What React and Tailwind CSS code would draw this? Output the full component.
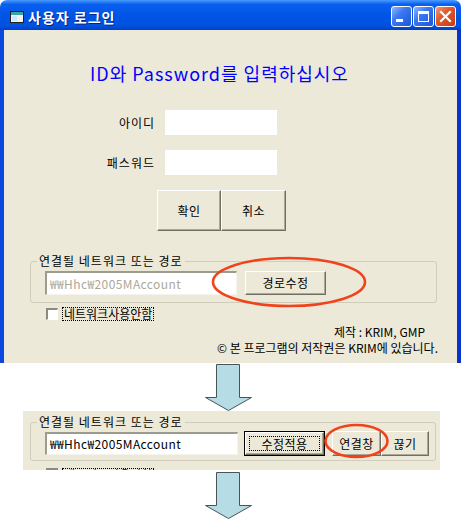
import React from "react";

const FONT = "font-['Noto_Sans_CJK_KR','Noto_Sans',sans-serif]";
const BTN =
  "flex items-center justify-center bg-[#ece9d8] border border-t-white border-l-white border-r-[#716f64] border-b-[#716f64] shadow-[inset_-1px_-1px_0_#aca899] text-[12px] leading-[14px] tracking-[0.5px] text-black";

function Arrow() {
  return (
    <svg width="48" height="48" viewBox="0 0 48 48" className="ml-[205px] block">
      <polygon
        points="11.5,1.5 34.5,1.5 34.5,34.5 46.5,34.5 23.5,47.5 0.5,34.5 11.5,34.5"
        fill="#b6dde6"
        stroke="#4a5358"
        strokeWidth="1"
      />
    </svg>
  );
}

function Sunken({ className, children }) {
  return (
    <div
      className={
        "flex items-center pl-[3px] bg-white border-t-2 border-l-2 border-t-[#9b9b8f] border-l-[#9b9b8f] border-b border-r border-b-[#f4f3ee] border-r-[#f4f3ee] text-[12px] leading-[14px] tracking-[0.4px] " +
        className
      }
    >
      {children}
    </div>
  );
}

function TitleButton({ kind }) {
  const isClose = kind === "close";
  return (
    <div
      className={
        "w-[21px] h-[21px] rounded-[3px] border border-white flex items-center justify-center " +
        (isClose
          ? "bg-[linear-gradient(135deg,#f09a7a_0%,#e0582c_40%,#c93b10_100%)]"
          : "bg-[linear-gradient(135deg,#8fb6ff_0%,#3a78f0_40%,#1d55d8_100%)]")
      }
    >
      <svg width="19" height="19" viewBox="0 0 19 19">
        {kind === "min" && <rect x="4" y="12" width="7" height="3" fill="white" />}
        {kind === "max" && (
          <g>
            <rect x="4.5" y="4.5" width="10" height="10" fill="none" stroke="white" strokeWidth="1" />
            <rect x="4" y="4" width="11" height="3" fill="white" />
          </g>
        )}
        {isClose && (
          <g stroke="white" strokeWidth="2.2" strokeLinecap="square">
            <line x1="5" y1="5" x2="14" y2="14" />
            <line x1="14" y1="5" x2="5" y2="14" />
          </g>
        )}
      </svg>
    </div>
  );
}

export default function App() {
  return (
    <div className={"relative w-[468px] h-[520px] bg-white overflow-hidden text-black " + FONT}>
      {/* Window */}
      <div className="w-[461px]">
        <div className="h-[30px] rounded-t-[7px] bg-[linear-gradient(to_bottom,#4a9cff_0%,#0a60ee_14%,#0055e6_50%,#0052df_86%,#003fc6_100%)] flex items-center pl-[10px] pr-[5px] pt-[3px]">
          <svg width="14" height="12" viewBox="0 0 14 12">
            <rect x="0.5" y="0.5" width="13" height="11" fill="#f2f2f2" stroke="#202020" />
            <rect x="1" y="1" width="12" height="3" fill="#3aa6a0" />
            <rect x="2" y="5" width="5" height="5" fill="#cfe7f7" />
          </svg>
          <span className="ml-[4px] text-white font-bold text-[14px] leading-[16px] tracking-[1px] [text-shadow:1px_1px_0_#0a1e8a]">
            사용자 로그인
          </span>
          <div className="ml-auto flex gap-[1px]">
            <TitleButton kind="min" />
            <TitleButton kind="max" />
            <TitleButton kind="close" />
          </div>
        </div>
        <div className="h-[333px] bg-[#ece9d8] border-l-4 border-r-4 border-l-[#0b48df] border-r-[#0a34c8] flex flex-col overflow-hidden">
          <div className="mt-[32px] pl-[86px] h-[22px] leading-[22px] text-[18px] tracking-[1px] text-[#0000ff] whitespace-nowrap">
            ID와 Password를 입력하십시오
          </div>
          <div className="mt-[26px] flex items-center h-[25px]">
            <div className="w-[151px] text-right text-[12px] leading-[14px] tracking-[1px]">아이디</div>
            <div className="ml-[10px] w-[112px] h-[25px] bg-white" />
          </div>
          <div className="mt-[15px] flex items-center h-[25px]">
            <div className="w-[151px] text-right text-[12px] leading-[14px] tracking-[1px]">패스워드</div>
            <div className="ml-[10px] w-[112px] h-[25px] bg-white" />
          </div>
          <div className="mt-[15px] ml-[153px] flex">
            <div className={BTN + " w-[64px] h-[41px]"}>확인</div>
            <div className={BTN + " w-[65px] h-[41px]"}>취소</div>
          </div>
          <fieldset className="mt-[23px] ml-[26px] w-[407px] border border-[#d0cdbd] rounded-[3px] pl-[14px] pt-[3px] pb-[7px]">
            <legend className="ml-[-8px] px-[2px] text-[12px] leading-[14px] tracking-[1px]">연결될 네트워크 또는 경로</legend>
            <div className="flex items-start gap-[8px]">
              <Sunken className="w-[192px] h-[24px] text-[#aca899]">₩₩Hhc₩2005MAccount</Sunken>
              <div className={BTN + " w-[81px] h-[24px]"}>경로수정</div>
            </div>
          </fieldset>
          <div className="mt-[4px] ml-[42px] flex items-center h-[14px]">
            <div className="w-[12px] h-[12px] bg-white border-t-2 border-l-2 border-t-[#8a8a80] border-l-[#8a8a80] border-b border-r border-b-white border-r-white" />
            <span className="ml-[4px] border border-dotted border-black px-[1px] text-[12px] leading-[12px]">
              네트워크사용안함
            </span>
          </div>
          <div className="mt-[4px] pr-[32px] text-right text-[12px] leading-[14px]">제작 : KRIM, GMP</div>
          <div className="mt-[2px] pr-[19px] text-right text-[12px] leading-[14px] whitespace-nowrap">
            © 본 프로그램의 저작권은 KRIM에 있습니다.
          </div>
        </div>
      </div>

      <Arrow />

      {/* Second panel */}
      <div className="ml-[23px] w-[417px] h-[59px] bg-[#ece9d8] overflow-hidden pt-[4px]">
        <fieldset className="ml-[7px] w-[406px] border border-[#d0cdbd] rounded-[3px] pl-[14px] pt-[2px] pb-[4px]">
          <legend className="ml-[-8px] px-[2px] text-[12px] leading-[14px] tracking-[1px]">연결될 네트워크 또는 경로</legend>
          <div className="flex items-start">
            <Sunken className="mt-[1px] w-[193px] h-[23px] text-black">₩₩Hhc₩2005MAccount</Sunken>
            <div className="ml-[6px] w-[81px] h-[25px] border border-black">
              <div className={BTN + " w-full h-full"}>
                <span className="border border-dotted border-black w-[71px] h-[15px] flex items-center justify-center">
                  수정적용
                </span>
              </div>
            </div>
            <div className={BTN + " ml-[7px] w-[49px] h-[25px]"}>연결창</div>
            <div className={BTN + " w-[48px] h-[25px]"}>끊기</div>
          </div>
        </fieldset>
        <div className="mt-[7px] ml-[23px] flex items-start h-[14px]">
          <div className="w-[12px] h-[12px] bg-white border-t-2 border-l-2 border-t-[#8a8a80] border-l-[#8a8a80]" />
          <span className="ml-[4px] border border-dotted border-black px-[1px] text-[12px] leading-[12px]">
            네트워크사용안함
          </span>
        </div>
      </div>

      <div className="mt-[1px]">
        <Arrow />
      </div>

      {/* Red highlight ellipses */}
      <svg className="absolute left-[211px] top-[256px]" width="156" height="52" viewBox="0 0 156 52">
        <ellipse cx="78" cy="26" rx="76" ry="24" fill="none" stroke="#f0431c" strokeWidth="2.6" />
      </svg>
      <svg className="absolute left-[324px] top-[423px]" width="65" height="36" viewBox="0 0 65 36">
        <ellipse cx="32.5" cy="18" rx="31" ry="16" fill="none" stroke="#f0431c" strokeWidth="2.6" />
      </svg>
    </div>
  );
}
